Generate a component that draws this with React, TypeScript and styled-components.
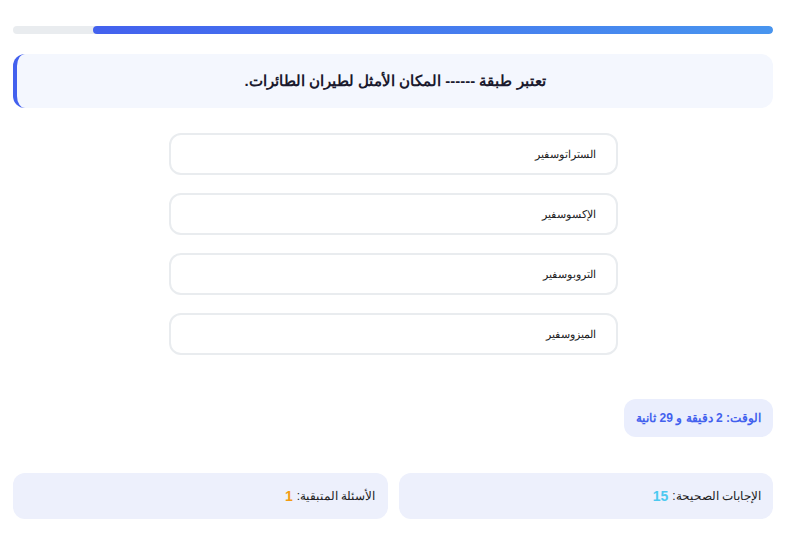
import { createGlobalStyle, styled } from "styled-components";

const GlobalStyle = createGlobalStyle`
  body {
    margin: 0;
    background: #ffffff;
    font-family: "Liberation Sans", Arial, sans-serif;
  }
`;

const options = ["الستراتوسفير", "الإكسوسفير", "التروبوسفير", "الميزوسفير"];

export default function App() {
  const progress = 89.5;

  return (
    <>
      <GlobalStyle />
      <Page dir="rtl">
        <Track>
          <Fill style={{ width: `${progress}%` }} />
        </Track>

        <Question>تعتبر طبقة ------ المكان الأمثل لطيران الطائرات.</Question>

        <Options>
          {options.map((o) => (
            <Option key={o}>{o}</Option>
          ))}
        </Options>

        <TimerRow>
          <Timer>الوقت: 2 دقيقة و 29 ثانية</Timer>
        </TimerRow>

        <Stats>
          <StatCard>
            الإجابات الصحيحة: <Num color="#4cc9f0">15</Num>
          </StatCard>
          <StatCard>
            الأسئلة المتبقية: <Num color="#f39c12">1</Num>
          </StatCard>
        </Stats>
      </Page>
    </>
  );
}

const Page = styled.div`
  padding: 26px 13px 20px;
  display: flex;
  flex-direction: column;
`;

const Track = styled.div`
  height: 8px;
  background: #e9ecef;
  border-radius: 4px;
  overflow: hidden;
`;

const Fill = styled.div`
  height: 100%;
  border-radius: 4px;
  background: linear-gradient(to left, #4895ef, #4361ee);
`;

const Question = styled.div`
  margin-top: 20px;
  height: 54px;
  display: flex;
  align-items: center;
  justify-content: center;
  background: #f4f7fe;
  border-left: 4px solid #4361ee;
  border-radius: 12px;
  font-size: 15px;
  font-weight: 700;
  color: #1a1a2e;
`;

const Options = styled.div`
  margin: 25px auto 0;
  width: 449px;
  display: flex;
  flex-direction: column;
  gap: 18px;
`;

const Option = styled.div`
  box-sizing: border-box;
  height: 42px;
  display: flex;
  align-items: center;
  padding: 0 20px;
  border: 2px solid #e9ecef;
  border-radius: 12px;
  background: #ffffff;
  font-size: 11px;
  color: #222;
`;

const TimerRow = styled.div`
  margin-top: 44px;
  display: flex;
`;

const Timer = styled.div`
  height: 38px;
  display: flex;
  align-items: center;
  padding: 0 12px;
  background: #eaeefd;
  border-radius: 12px;
  color: #4361ee;
  font-size: 12px;
  font-weight: 700;
`;

const Stats = styled.div`
  margin-top: 36px;
  display: grid;
  grid-template-columns: 1fr 1fr;
  gap: 11px;
`;

const StatCard = styled.div`
  height: 46px;
  display: flex;
  align-items: center;
  gap: 4px;
  padding: 0 12px;
  background: #edf0fc;
  border-radius: 12px;
  font-size: 12px;
  color: #222;
`;

const Num = styled.span<{ color: string }>`
  color: ${({ color }) => color};
  font-weight: 700;
  font-size: 14px;
`;
